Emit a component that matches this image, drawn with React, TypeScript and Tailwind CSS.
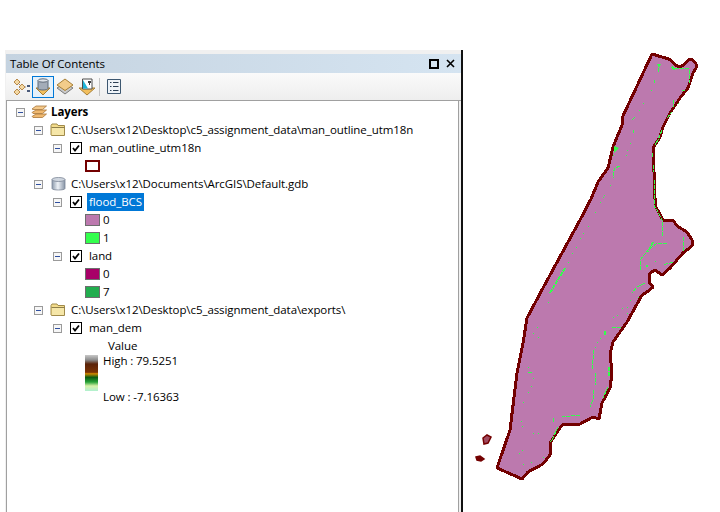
const greenLines = [
  "M654 190V207L656 208L662 220V237", "M654 180V200", "M653 165V172", "M652 153V158", "M658 68V73", "M654 80V83",
  "M675 68L689 69V83", "M671 67L675 71", "M682 91L685 90", "M673 100V107", "M667 118L672 112", "M662 130L658 140L655 145",
  "M632 120L636 116", "M633 130V133", "M620 166L615 168L613 173V178", "M667 243H657L648 250L640 260V270",
  "M684 237L683 252", "M673 262L663 265", "M645 283L637 287L632 293", "M612 327H622", "M593 350V360L592 370", "M595 373V385",
  "M593 390V400L590 407", "M580 415L562 417", "M553 418V423", "M558 427L552 440L550 442", "M608 387L603 398", "M528 372H532",
];

const greenThick = ["M565 268L550 293", "M653 242L648 252", "M609 367V377", "M605 331V335", "M647 265V267", "M672 67L675 70"];

const greenDots = [
  [643, 103], [639, 110], [630, 143], [627, 150], [626, 155], [610, 185], [603, 197], [604, 195], [600, 202], [595, 212], [588, 226],
  [583, 233], [580, 238], [576, 247], [572, 253], [568, 262], [548, 302], [537, 327], [533, 333], [538, 337], [651, 90], [678, 103],
  [655, 261], [638, 297], [630, 300], [627, 307], [622, 308], [617, 315], [627, 313], [613, 317], [600, 338], [595, 347], [597, 342],
  [528, 367], [533, 378], [531, 386], [528, 392], [523, 402], [521, 421], [522, 426], [533, 433], [538, 433], [522, 450], [519, 453],
  [523, 464], [531, 462], [543, 457], [613, 155],
];

const outline =
  "M652 54L662 57L669 59L677 66H682L690 59L693 60L696 64V68L693 73L688 88L680 98L670 113L663 127L660 137L653 148L654 172L654 190L656 207L663 220H673L677 226L687 232L692 240V246L683 253L670 268L662 275L655 270L650 273L649 282L653 287L647 292L642 295L627 322L613 342L611 350L610 353L612 373L610 388L602 403L599 419L593 417L580 424L562 425L550 443V455L543 464L528 472L522 479L497 468L510 430L517 373L523 343L527 318L543 288L562 253L580 220L591 199L598 182L608 168L613 147L622 125V118Z";

function MapView() {
  return (
    <svg width="257" height="512" viewBox="463 0 257 512" className="shrink-0">
      <path d={outline} fill="#bc79ae" stroke="#730000" strokeWidth="3" strokeLinejoin="round" shapeRendering="crispEdges" />
      <path d="M483 438L487 435L491 437L488 443L484 444Z" fill="#a04a60" stroke="#730000" strokeWidth="1.5" />
      <path d="M476 457L480 456L484 459L481 461L477 460Z" fill="#730000" stroke="#730000" strokeWidth="1.5" />
      {greenLines.map((d) => (
        <path key={d} d={d} fill="none" stroke="#33ff4d" strokeWidth="1" strokeDasharray="4 1" shapeRendering="crispEdges" />
      ))}
      {greenThick.map((d) => (
        <path key={d} d={d} fill="none" stroke="#33ff4d" strokeWidth="2" strokeDasharray="4 1" shapeRendering="crispEdges" />
      ))}
      <path d="M657 64H661L659 68Z" fill="#33ff4d" />
      <path d="M614 146L619 148L614 153Z" fill="#33ff4d" />
      {greenDots.map(([x, y]) => (
        <rect key={`${x}-${y}`} x={x} y={y} width="1" height="1" fill="#33ff4d" />
      ))}
    </svg>
  );
}

function Expander() {
  return (
    <span className="flex h-[9px] w-[9px] shrink-0 items-center justify-center border border-[#9a9a9a] bg-[#f6f6f6]">
      <span className="h-px w-[5px] bg-[#2f4f9f]" />
    </span>
  );
}

function Check() {
  return (
    <span className="flex h-[12px] w-[12px] shrink-0 items-center justify-center border border-black bg-white">
      <svg width="10" height="10" viewBox="0 0 10 10">
        <path d="M2 5L4 7.5L8 2.5" fill="none" stroke="#000" strokeWidth="1.8" />
      </svg>
    </span>
  );
}

function FolderIcon() {
  return (
    <svg width="16" height="14" viewBox="0 0 16 14" className="shrink-0">
      <path d="M1 12V2.5L2 1H7L8 2.5H14.5V12.5H1.5Z" fill="#f3dc8c" stroke="#a08a4a" />
      <path d="M2 5H14V12H2Z" fill="#f5e6a8" />
      <path d="M1.5 4.5H14.5" stroke="#8f7f4a" />
    </svg>
  );
}

function DbIcon() {
  return (
    <svg width="15" height="14" viewBox="0 0 15 14" className="shrink-0">
      <defs>
        <linearGradient id="db" x1="0" x2="1" y1="0" y2="0">
          <stop offset="0" stopColor="#8b99ab" />
          <stop offset="0.45" stopColor="#eef2f7" />
          <stop offset="1" stopColor="#8794a6" />
        </linearGradient>
      </defs>
      <path d="M1 2.5V11.5C1 13.5 14 13.5 14 11.5V2.5Z" fill="url(#db)" stroke="#7c8797" strokeWidth="0.8" />
      <ellipse cx="7.5" cy="2.5" rx="6.5" ry="2" fill="#cfd6df" stroke="#7c8797" strokeWidth="0.8" />
    </svg>
  );
}

function LayersIcon() {
  return (
    <svg width="16" height="14" viewBox="0 0 16 14" className="shrink-0">
      <path d="M1 11.5L5 9H15.5L11.5 12.5H2Z" fill="#f0b970" stroke="#a8763a" strokeWidth="0.8" />
      <path d="M1 7.5L5 5H15.5L11.5 8.5H2Z" fill="#f0b970" stroke="#a8763a" strokeWidth="0.8" />
      <path d="M1 4L5 1H15.5L11.5 4.5H2Z" fill="#f4c98a" stroke="#a8763a" strokeWidth="0.8" />
    </svg>
  );
}

function TreeRow({ pad, children }: { pad: string; children: React.ReactNode }) {
  return <div className={`flex h-[18px] items-center whitespace-nowrap ${pad}`}>{children}</div>;
}

function SourceRow({ icon, text }: { icon: React.ReactNode; text: string }) {
  return (
    <TreeRow pad="pl-[27px]">
      <Expander />
      <span className="ml-[7px] flex w-[16px] justify-center">{icon}</span>
      <span className="ml-[5px]">{text}</span>
    </TreeRow>
  );
}

function LayerRow({ name, selected }: { name: string; selected?: boolean }) {
  return (
    <TreeRow pad="pl-[46px]">
      <Expander />
      <span className="ml-[8px]">
        <Check />
      </span>
      <span className={`ml-[5px] flex h-[18px] w-fit items-center px-[2px] ${selected ? "bg-[#0078d7] text-white" : ""}`}>{name}</span>
    </TreeRow>
  );
}

function SwatchRow({ color, label }: { color: string; label: string }) {
  return (
    <TreeRow pad="pl-[78px]">
      <span className={`h-[12px] w-[15px] border border-[#6e6e6e] ${color}`} />
      <span className="ml-[3px]">{label}</span>
    </TreeRow>
  );
}

function ToolIcons() {
  return (
    <div className="flex h-[28px] items-center border-b border-[#a0a0a0] bg-[linear-gradient(#fafafa,#eeeeee)]">
      <svg width="18" height="18" viewBox="0 0 18 18" className="ml-[7px] shrink-0">
        <path d="M4 4L9 9L4 14M9 9H13" fill="none" stroke="#8f8f8f" />
        <path d="M1 4L4 1L7 4L4 7Z" fill="#f3d8a4" stroke="#b98a4a" />
        <path d="M6 9L9 6L12 9L9 12Z" fill="#f3d8a4" stroke="#b98a4a" />
        <path d="M1 14L4 11L7 14L4 17Z" fill="#f3d8a4" stroke="#b98a4a" />
        <path d="M14 7H17V9H14ZM14 12H17V14H14Z" fill="#4a5a7a" />
      </svg>
      <span className="ml-px flex h-[22px] w-[22px] items-center justify-center border border-[#0078d7] bg-[#e5f1fb]">
        <svg width="16" height="18" viewBox="0 0 16 18">
          <path d="M1 10L8 17L15 10Z" fill="#f2bf5e" stroke="#a77f35" />
          <path d="M3 2.5V10.5C3 12.5 13 12.5 13 10.5V2.5Z" fill="#a3acb8" stroke="#5f6a78" />
          <ellipse cx="8" cy="2.5" rx="5" ry="1.7" fill="#dfe4ea" stroke="#5f6a78" />
        </svg>
      </span>
      <svg width="18" height="17" viewBox="0 0 18 17" className="ml-[2px] shrink-0">
        <path d="M1 10L9 5L17 10L9 16Z" fill="#c9c9c9" stroke="#7a7a7a" />
        <path d="M1 7L9 1L17 7L9 12.5Z" fill="#f2cc8a" stroke="#a77f35" />
      </svg>
      <svg width="18" height="18" viewBox="0 0 18 18" className="ml-[4px] shrink-0">
        <path d="M1 10L9 17L17 10Z" fill="#f2bf5e" stroke="#a77f35" />
        <path d="M4.5 1H14V11H4.5Z" fill="#fff" stroke="#4d4d4d" />
        <path d="M5 2L10 10.5H5Z" fill="#1eb5d8" />
        <path d="M10 3H13V5H12V7H11V5H10Z" fill="#3d3d3d" />
      </svg>
      <span className="ml-[3px] h-[18px] w-px bg-[#c4c4c4]" />
      <svg width="14" height="15" viewBox="0 0 14 15" className="ml-[7px] shrink-0">
        <path d="M.5 .5H13.5V14.5H.5Z" fill="#eef3f8" stroke="#3d5770" />
        <path d="M3 3.5H4.5M6 3.5H11.5M3 7.5H4.5M6 7.5H11.5M3 11.5H4.5M6 11.5H11.5" stroke="#2b3f55" />
      </svg>
    </div>
  );
}

export default function App() {
  return (
    <div className="flex h-[512px] w-[720px] overflow-hidden bg-white font-['Open_Sans',sans-serif] text-[11.5px] leading-[18px] tracking-[-0.08px] text-black">
      <div className="ml-[5px] mt-[50px] flex w-[458px] shrink-0 flex-col border-r-2 border-[#111111] bg-[#f0f0f0] pt-[4px]">
        <div className="ml-px flex h-[19px] items-center justify-between bg-[linear-gradient(90deg,#c5d3e0,#d5e4f1)] pl-[4px] pr-[6px]">
          <span>Table Of Contents</span>
          <div className="flex items-center gap-[7px]">
            <span className="h-[10px] w-[10px] border-2 border-black" />
            <svg width="9" height="9" viewBox="0 0 9 9">
              <path d="M1 1L8 8M8 1L1 8" stroke="#000" strokeWidth="1.6" />
            </svg>
          </div>
        </div>
        <div className="ml-px">
          <ToolIcons />
        </div>
        <div className="ml-px mr-[2px] flex-1 border-x border-[#a0a0a0] bg-white pt-[2px]">
          <TreeRow pad="pl-[9px]">
            <Expander />
            <span className="ml-[6px]">
              <LayersIcon />
            </span>
            <span className="ml-[4px] font-bold">Layers</span>
          </TreeRow>
          <SourceRow icon={<FolderIcon />} text="C:\Users\x12\Desktop\c5_assignment_data\man_outline_utm18n" />
          <LayerRow name="man_outline_utm18n" />
          <TreeRow pad="pl-[78px]">
            <span className="h-[12px] w-[15px] border-2 border-[#730000] bg-white" />
          </TreeRow>
          <SourceRow icon={<DbIcon />} text="C:\Users\x12\Documents\ArcGIS\Default.gdb" />
          <LayerRow name="flood_BCS" selected />
          <SwatchRow color="bg-[#bc79ae]" label="0" />
          <SwatchRow color="bg-[#33ff4d]" label="1" />
          <LayerRow name="land" />
          <SwatchRow color="bg-[#a80068]" label="0" />
          <SwatchRow color="bg-[#22ad4e]" label="7" />
          <SourceRow icon={<FolderIcon />} text="C:\Users\x12\Desktop\c5_assignment_data\exports\" />
          <LayerRow name="man_dem" />
          <div className="h-[15px] pl-[101px] pt-[3px] leading-[12px]">Value</div>
          <div className="mt-[3px] flex pl-[78px]">
            <div className="h-[36px] w-[13px] bg-[linear-gradient(#c8c8c8_0%,#8a8a8a_14%,#5a2208_25%,#7a3205_48%,#d08a00_52%,#0a5a12_62%,#26a136_75%,#d8f2a8_86%,#b0f0d0_100%)]" />
            <div className="ml-[5px] flex h-[48px] flex-col justify-between leading-[12px]">
              <span>High : 79.5251</span>
              <span>Low : -7.16363</span>
            </div>
          </div>
        </div>
      </div>
      <MapView />
    </div>
  );
}
